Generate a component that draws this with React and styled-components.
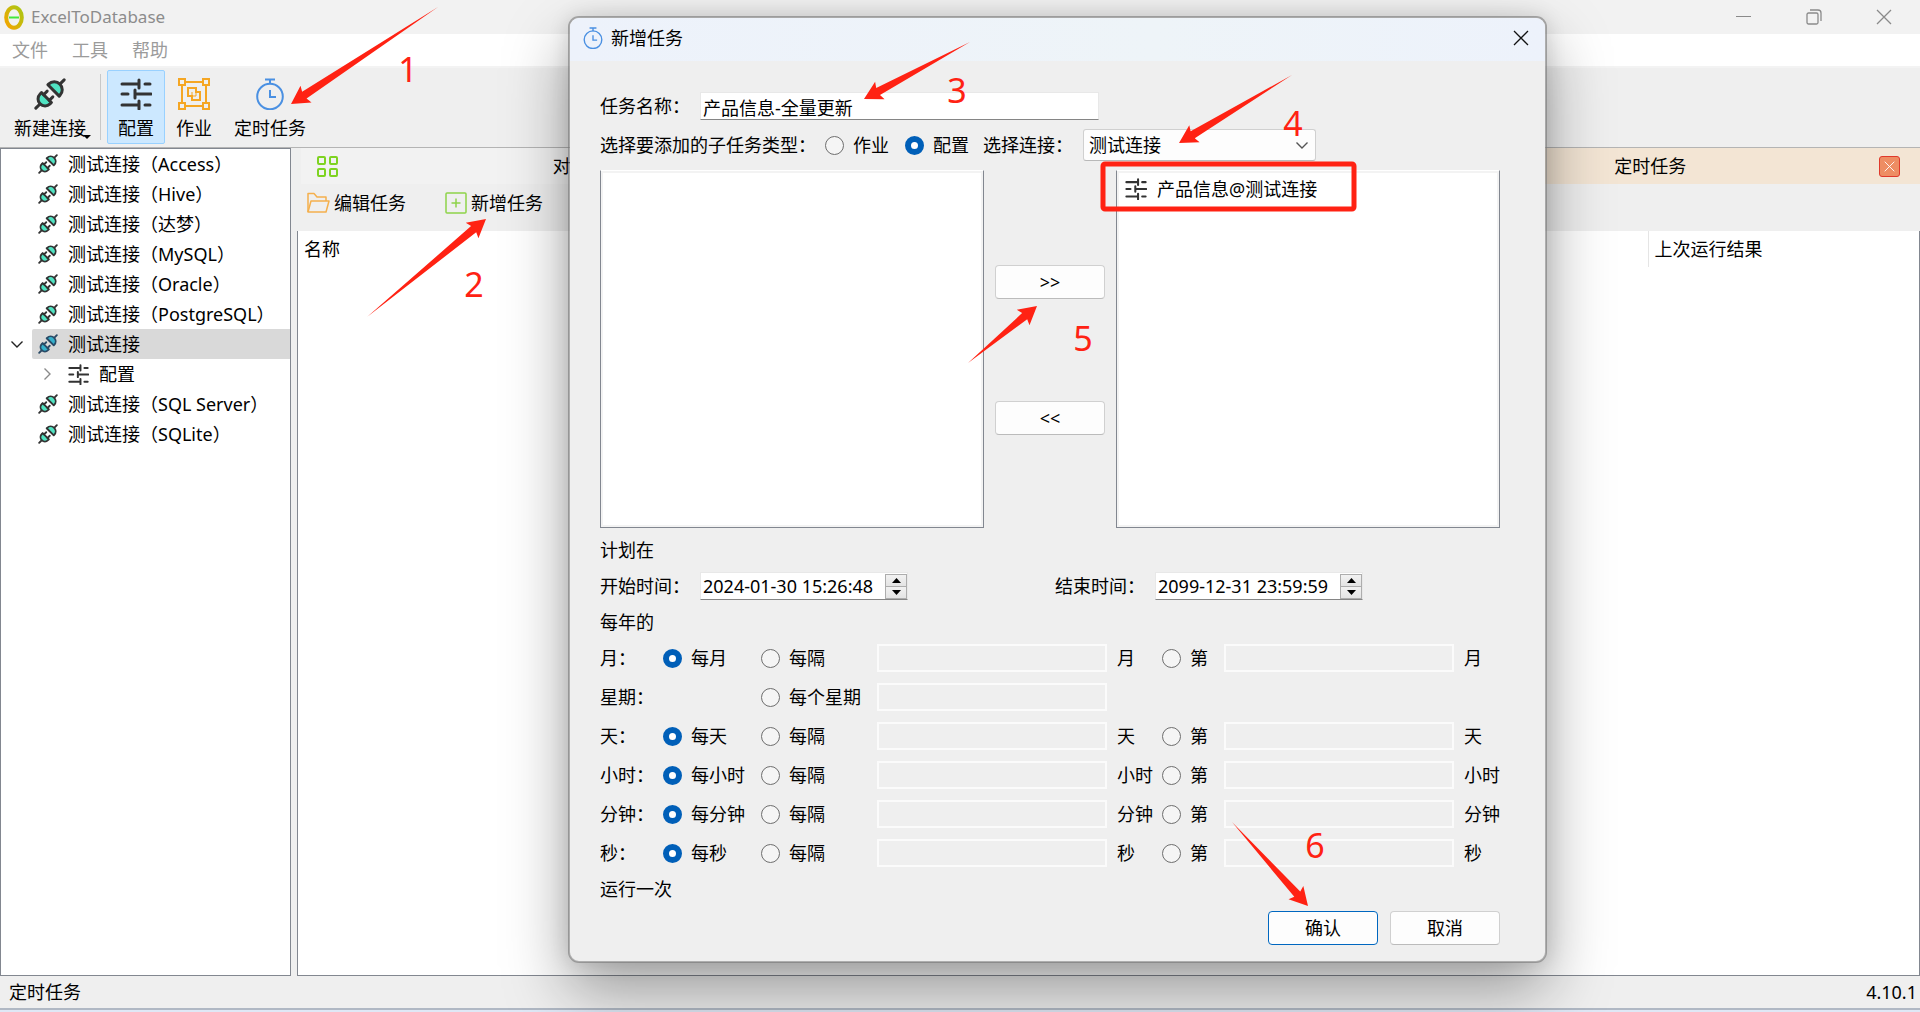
import React from 'react';
import styled, { createGlobalStyle, css } from 'styled-components';

const colors = {
  panel: '#efefef',
  frame: '#828790',
  accent: '#005fb8',
  mark: '#ff2213',
  teal: '#50e3c2',
  dark: '#333333',
  orange: '#f5a623',
  blue: '#4a90e2',
  green: '#7ed321',
};

const GlobalStyle = createGlobalStyle`
  * {
    box-sizing: border-box;
  }
  body {
    margin: 0;
    background: ${colors.panel};
  }
  body, button, input, select {
    font-family: 'Noto Sans', 'Noto Sans CJK SC', sans-serif;
    font-size: 18px;
    line-height: 26px;
    color: #000;
  }
`;

const Window = styled.div`
  position: relative;
  display: flex;
  flex-direction: column;
  min-height: 100vh;
  overflow: hidden;
`;

const TitleBar = styled.header`
  display: flex;
  align-items: center;
  gap: 7px;
  height: 34px;
  padding: 0 28px 0 4px;
  background: #f2f2f2;
  color: #8c8c8c;
`;

const AppTitle = styled.span`
  flex: 1;
  font-size: 17px;
`;

const WindowControls = styled.div`
  display: flex;
  gap: 54px;
`;

const IconButton = styled.button`
  display: flex;
  padding: 0;
  border: none;
  background: none;
`;

const MenuBar = styled.nav`
  display: flex;
  gap: 24px;
  height: 34px;
  padding: 3px 12px;
  background: #fff;
  border-bottom: 2px solid #f3f3f3;
`;

const MenuItem = styled.button`
  padding: 0;
  border: none;
  background: none;
  color: #9b9b9b;
`;

const ToolBar = styled.div`
  display: flex;
  height: 80px;
  padding: 2px 3px;
  border-bottom: 1px solid #b4b4b4;
`;

const ToolButton = styled.button`
  position: relative;
  display: flex;
  flex-direction: column;
  align-items: center;
  gap: 5px;
  height: 74px;
  padding: 7px 10px 0;
  border: 1px solid transparent;
  border-radius: 2px;
  background: none;
  white-space: nowrap;
  ${({ $active }) =>
    $active &&
    css`
      background: #cce8ff;
      border-color: #99d1ff;
    `};
`;

const ToolSeparator = styled.div`
  width: 1px;
  height: 66px;
  margin: 4px 6px 0 3px;
  background: #c8c8c8;
`;

const MenuArrow = styled.i`
  position: absolute;
  right: 5px;
  bottom: 4px;
  border: 4px solid transparent;
  border-top-color: #000;
  border-bottom: none;
`;

const Main = styled.main`
  flex: 1;
  display: flex;
  gap: 6px;
`;

const Tree = styled.ul`
  width: 291px;
  margin: 0;
  padding: 0;
  list-style: none;
  background: #fff;
  border: 1px solid ${colors.frame};
`;

const TreeItem = styled.li`
  display: flex;
  align-items: center;
  height: 30px;
  padding-left: ${({ $level }) => ($level ? 30 : 0)}px;
`;

const TreeToggle = styled.span`
  display: flex;
  justify-content: center;
  width: 31px;
`;

const TreeLabel = styled.span`
  flex: 1;
  display: flex;
  align-items: center;
  gap: 10px;
  height: 30px;
  padding-left: 6px;
  border-radius: 2px 0 0 2px;
  white-space: nowrap;
  background: ${({ $selected }) => ($selected ? '#d9d9d9' : 'none')};
`;

const Workspace = styled.section`
  flex: 1;
  display: flex;
  flex-direction: column;
`;

const TabBar = styled.div`
  display: flex;
  height: 36px;
  padding-left: 4px;
`;

const Tab = styled.button`
  flex: 1;
  display: grid;
  grid-template-columns: 25px 1fr 25px;
  align-items: center;
  padding: 0 16px;
  border: none;
  background: ${({ $active }) => ($active ? '#f3e5d4' : '#f2f2f2')};
`;

const TabText = styled.span`
  grid-column: 2;
  text-align: center;
`;

const TabSpace = styled.div`
  flex: 1;
  padding: 0 16px;
`;

const CloseMark = styled.span`
  display: grid;
  place-items: center;
  width: 21px;
  height: 21px;
  border: 1px solid #e0392b;
  border-radius: 3px;
  background: #ee8d63;
`;

const TaskBar = styled.div`
  display: flex;
  gap: 39px;
  height: 47px;
  padding: 0 9px;
`;

const TaskButton = styled.button`
  display: flex;
  align-items: center;
  gap: 4px;
  height: 38px;
  padding: 0;
  border: none;
  background: none;
`;

const TableFrame = styled.div`
  flex: 1;
  background: #fff;
  border: 1px solid ${colors.frame};
  border-top: none;
`;

const TaskTable = styled.table`
  width: 100%;
  table-layout: fixed;
  border-collapse: collapse;
`;

const HeadCell = styled.th`
  width: ${({ $width }) => $width || 'auto'};
  height: 36px;
  padding: 0 6px;
  font-weight: 400;
  text-align: left;
  & + & {
    border-left: 1px solid #e5e5e5;
  }
`;

const StatusBar = styled.footer`
  display: flex;
  justify-content: space-between;
  height: 36px;
  padding: 3px 3px 0 9px;
  border-bottom: 2px solid #dfe8f6;
  box-shadow: inset 0 -2px #b0b8c4;
`;

const Dialog = styled.section`
  position: absolute;
  left: 568px;
  top: 16px;
  width: 979px;
  border: 2px solid rgba(120, 120, 120, 0.6);
  border-radius: 11px;
  background: ${colors.panel};
  background-clip: padding-box;
  box-shadow:
    0 0 20px rgba(0, 0, 0, 0.12),
    0 28px 64px rgba(0, 0, 0, 0.36);
`;

const DialogTitle = styled.header`
  display: flex;
  align-items: center;
  gap: 7px;
  height: 43px;
  padding: 0 16px 3px 12px;
  border-radius: 9px 9px 0 0;
  background: linear-gradient(90deg, #edf2fb, #eef4f8 60%, #edf2fb);
`;

const DialogName = styled.h1`
  flex: 1;
  margin: 0;
  font-size: 18px;
  font-weight: 400;
`;

const Form = styled.form`
  display: flex;
  flex-direction: column;
  gap: 9px;
  padding: 31px 45px 16px 30px;
`;

const FormRow = styled.div`
  display: flex;
  align-items: center;
  height: ${({ $tall }) => ($tall ? 32 : 28)}px;
`;

const FieldLabel = styled.label`
  flex: none;
  width: 100px;
  white-space: nowrap;
`;

const TextInput = styled.input`
  width: 399px;
  height: 28px;
  padding: 1px 2px 0;
  border: 1px solid #e8e8e8;
  border-bottom-color: #858585;
  background: #fff;
  outline: none;
`;

const Legend = styled.span`
  width: 225px;
`;

const RadioLabel = styled.label`
  display: flex;
  align-items: center;
  gap: 9px;
  white-space: nowrap;
`;

const Radio = styled.input.attrs({ type: 'radio' })`
  appearance: none;
  width: 19px;
  height: 19px;
  margin: 0;
  border: 1px solid #6e6e6e;
  border-radius: 50%;
  background: #f5f5f5;
  &:checked {
    border: 6px solid ${colors.accent};
    background: #fff;
  }
`;

const RadioPair = styled.div`
  display: flex;
  gap: 16px;
  margin-right: 14px;
`;

const SelectBox = styled.div`
  display: grid;
  align-items: center;
  width: 233px;
  & > * {
    grid-area: 1 / 1;
  }
  & > svg {
    justify-self: end;
    margin-right: 8px;
    pointer-events: none;
  }
`;

const Select = styled.select`
  appearance: none;
  height: 32px;
  padding: 0 5px;
  border: 1px solid #d0d0d0;
  border-bottom-color: #b8b8b8;
  border-radius: 3px;
  background: #fdfdfd;
`;

const Transfer = styled.div`
  display: grid;
  grid-template-columns: 1fr 110px 1fr;
  column-gap: 11px;
  height: 358px;
`;

const ListBox = styled.ul`
  margin: 0;
  padding: 3px 8px;
  list-style: none;
  border: 1px solid ${colors.frame};
  border-top-color: #fff;
  background: #fff;
  box-shadow: inset 0 0 0 2px #f3f3f3;
`;

const ListItem = styled.li`
  display: flex;
  align-items: center;
  gap: 10px;
  height: 30px;
`;

const TransferButtons = styled.div`
  display: flex;
  flex-direction: column;
  gap: 102px;
  padding-top: 95px;
`;

const PushButton = styled.button`
  width: 110px;
  height: 34px;
  padding: 0;
  border: 1px solid ${({ $primary }) => ($primary ? '#0067c0' : '#d0d0d0')};
  border-bottom-color: ${({ $primary }) => ($primary ? '#0067c0' : '#bbb')};
  border-radius: 4px;
  background: #fdfdfd;
`;

const DateBox = styled.div`
  display: flex;
  align-items: center;
  width: 208px;
  height: 28px;
  margin-right: 147px;
  border: 1px solid #e8e8e8;
  border-bottom-color: #858585;
  background: #fff;
`;

const DateInput = styled.input`
  flex: 1;
  min-width: 0;
  height: 26px;
  padding: 0 2px;
  border: none;
  background: none;
  outline: none;
`;

const Spinner = styled.div`
  display: grid;
  width: 22px;
  height: 25px;
`;

const SpinButton = styled.button`
  display: grid;
  place-items: center;
  padding: 0;
  border: 1px solid #adadad;
  background: linear-gradient(#f2f2f2, #e4e4e4);
  & + & {
    border-top: none;
  }
`;

const Caption = styled.div`
  height: 26px;
`;

const Schedule = styled.div`
  display: flex;
  flex-direction: column;
  gap: 11px;
`;

const ScheduleRow = styled.div`
  display: grid;
  grid-template-columns: 63px 98px 116px 1fr 55px 62px 1fr 46px;
  align-items: center;
  height: 28px;
  white-space: nowrap;
`;

const RangeInput = styled.input`
  width: 100%;
  height: 28px;
  border: 2px solid #fbfbfb;
  background: transparent;
`;

const Unit = styled.span`
  padding-left: 10px;
`;

const Actions = styled.div`
  display: flex;
  justify-content: flex-end;
  gap: 12px;
`;

const Marks = styled.svg`
  position: absolute;
  left: 0;
  top: 0;
  pointer-events: none;
  overflow: visible;
  font-family: 'Noto Sans', sans-serif;
  font-size: 34px;
`;

const PlugIcon = ({ size = 20, selected }) => {
  const ink = selected ? '#2a4a66' : colors.dark;
  const fill = selected ? '#35b0cb' : colors.teal;
  return (
    <svg width={size} height={size} viewBox="-16 -16 32 32" aria-hidden="true">
      <g transform="rotate(-45)" fill={fill} stroke={ink} strokeWidth="3">
        <path d="M-20 0H-13M20 0H14" strokeLinecap="round" />
        <path d="M-5 -7H-7A7 7 0 0 0 -7 7H-5Z" strokeLinejoin="round" />
        <path d="M-5 -4H0M-5 4H0" strokeLinecap="round" />
        <path d="M5 -8V8H6A8 8 0 0 0 6 -8Z" strokeLinejoin="round" />
      </g>
    </svg>
  );
};

const SlidersIcon = ({ size = 32 }) => (
  <svg width={size} height={size} viewBox="0 0 32 32" fill="none" stroke={colors.dark} strokeWidth="3" strokeLinecap="round" aria-hidden="true">
    <path d="M2 6H19M19 2V10M25 6H30" />
    <path d="M2 16H8M15 12V20M15 16H31" />
    <path d="M2 27H19M19 23V31M25 27H30" />
  </svg>
);

const JobIcon = () => (
  <svg width="32" height="32" viewBox="0 0 32 32" fill="none" stroke={colors.orange} strokeWidth="2" aria-hidden="true">
    <path d="M1 1H7V7H1ZM25 1H31V7H25ZM1 25H7V31H1ZM25 25H31V31H25Z" />
    <path d="M7 4H25M7 28H25M4 7V25M28 7V25" />
    <path d="M10 10H18V14H22V22H14V18H10Z" />
    <path d="M14 14V18H18V14" strokeWidth="1" />
  </svg>
);

const TimerIcon = ({ size = 32, stroke = 2 }) => (
  <svg width={size} height={size} viewBox="0 0 32 32" fill="none" stroke={colors.blue} strokeWidth={stroke} aria-hidden="true">
    <circle cx="16" cy="18.5" r="12.8" />
    <path d="M11 1.5H21M16 2V6M16 12V19H22" />
  </svg>
);

const GridIcon = () => (
  <svg width="21" height="21" viewBox="0 0 21 21" fill="none" stroke={colors.green} strokeWidth="2" aria-hidden="true">
    <rect x="1" y="1" width="7" height="7" rx="1" />
    <rect x="13" y="1" width="7" height="7" rx="1" />
    <rect x="1" y="13" width="7" height="7" rx="1" />
    <rect x="13" y="13" width="7" height="7" rx="1" />
  </svg>
);

const FolderIcon = () => (
  <svg width="24" height="22" viewBox="0 0 24 22" fill="none" stroke="#f5b04d" strokeWidth="1.5" strokeLinejoin="round" aria-hidden="true">
    <path d="M2 20V1.5H8L11 5H20V9" />
    <path d="M2 20L5 9H23L20 20Z" />
  </svg>
);

const AddIcon = () => (
  <svg width="22" height="22" viewBox="0 0 22 22" fill="none" stroke="#8ed44a" strokeWidth="1.5" aria-hidden="true">
    <rect x="1" y="1" width="20" height="20" rx="1" />
    <path d="M11 6.5V15.5M6.5 11H15.5" />
  </svg>
);

const LogoIcon = () => (
  <svg width="20" height="25" viewBox="0 0 20 25" fill="none" aria-hidden="true">
    <defs>
      <linearGradient id="logo" x1="0" y1="1" x2="1" y2="0">
        <stop offset="0" stopColor="#f7a400" />
        <stop offset="1" stopColor="#a8c814" />
      </linearGradient>
    </defs>
    <ellipse cx="10" cy="12.5" rx="7.8" ry="10.3" stroke="url(#logo)" strokeWidth="4" />
    <path d="M5 12.5H15" stroke="#42e83c" strokeWidth="2" />
  </svg>
);

const CrossIcon = ({ size = 16, color = '#8a8a8a' }) => (
  <svg width={size} height={size} viewBox="0 0 16 16" fill="none" stroke={color} strokeWidth="1.3" aria-hidden="true">
    <path d="M1 1L15 15M15 1L1 15" />
  </svg>
);

const ChevronIcon = ({ right, color = '#222' }) => (
  <svg width="12" height="12" viewBox="0 0 12 12" fill="none" stroke={color} strokeWidth="1.4" aria-hidden="true">
    <path d={right ? 'M3.5 0.5L9 6L3.5 11.5' : 'M0.5 3.5L6 9L11.5 3.5'} />
  </svg>
);

const connections = [
  { name: '测试连接（Access）' },
  { name: '测试连接（Hive）' },
  { name: '测试连接（达梦）' },
  { name: '测试连接（MySQL）' },
  { name: '测试连接（Oracle）' },
  { name: '测试连接（PostgreSQL）' },
  { name: '测试连接', selected: true, children: ['配置'] },
  { name: '测试连接（SQL Server）' },
  { name: '测试连接（SQLite）' },
];

const units = [
  { id: 'month', unit: '月', every: '每月', interval: '每隔' },
  { id: 'week', unit: '星期', interval: '每个星期' },
  { id: 'day', unit: '天', every: '每天', interval: '每隔' },
  { id: 'hour', unit: '小时', every: '每小时', interval: '每隔' },
  { id: 'minute', unit: '分钟', every: '每分钟', interval: '每隔' },
  { id: 'second', unit: '秒', every: '每秒', interval: '每隔' },
];

const steps = [
  { from: [438, 7], to: [291, 104], at: [408, 82] },
  { from: [367, 317], to: [486, 219], at: [474, 297] },
  { from: [970, 42], to: [864, 99], at: [957, 103] },
  { from: [1292, 75], to: [1179, 143], at: [1293, 136] },
  { from: [968, 363], to: [1037, 306], at: [1083, 351] },
  { from: [1232, 822], to: [1308, 906], at: [1315, 858] },
];

// outline of a tapering arrow, measured back from its tip
const arrowPoints = ([x1, y1], [x2, y2]) => {
  const length = Math.hypot(x1 - x2, y1 - y2);
  const dx = (x1 - x2) / length;
  const dy = (y1 - y2) / length;
  const point = (along, across) => `${x2 + dx * along - dy * across},${y2 + dy * along + dx * across}`;
  return [point(0, 0), point(18, 10), point(16, 4), point(length, 0), point(16, -4), point(18, -10)].join(' ');
};

const ConnectionTree = () => (
  <Tree>
    {connections.map(({ name, selected, children }) => (
      <React.Fragment key={name}>
        <TreeItem>
          <TreeToggle>{children && <ChevronIcon />}</TreeToggle>
          <TreeLabel $selected={selected}>
            <PlugIcon selected={selected} />
            {name}
          </TreeLabel>
        </TreeItem>
        {children?.map((child) => (
          <TreeItem key={child} $level={1}>
            <TreeToggle>
              <ChevronIcon right color="#8a8a8a" />
            </TreeToggle>
            <TreeLabel>
              <SlidersIcon size={21} />
              {child}
            </TreeLabel>
          </TreeItem>
        ))}
      </React.Fragment>
    ))}
  </Tree>
);

const DateField = ({ id, label, value }) => (
  <>
    <FieldLabel htmlFor={id}>{label}</FieldLabel>
    <DateBox>
      <DateInput id={id} defaultValue={value} />
      <Spinner>
        <SpinButton type="button" aria-label="+">
          <svg width="9" height="5" viewBox="0 0 9 5">
            <path d="M0 5L4.5 0L9 5Z" />
          </svg>
        </SpinButton>
        <SpinButton type="button" aria-label="-">
          <svg width="9" height="5" viewBox="0 0 9 5">
            <path d="M0 0L4.5 5L9 0Z" />
          </svg>
        </SpinButton>
      </Spinner>
    </DateBox>
  </>
);

const ScheduleUnit = ({ id, unit, every, interval }) => (
  <ScheduleRow>
    <span>{unit}：</span>
    {every ? (
      <RadioLabel>
        <Radio name={id} defaultChecked />
        {every}
      </RadioLabel>
    ) : (
      <span />
    )}
    <RadioLabel>
      <Radio name={id} />
      {interval}
    </RadioLabel>
    <RangeInput aria-label={interval} disabled />
    {every && (
      <>
        <Unit>{unit}</Unit>
        <RadioLabel>
          <Radio name={id} />第
        </RadioLabel>
        <RangeInput aria-label="第" disabled />
        <Unit>{unit}</Unit>
      </>
    )}
  </ScheduleRow>
);

const TaskDialog = () => (
  <Dialog role="dialog" aria-labelledby="dialog-name">
    <DialogTitle>
      <TimerIcon size={22} />
      <DialogName id="dialog-name">新增任务</DialogName>
      <IconButton type="button" aria-label="取消">
        <CrossIcon color="#111" />
      </IconButton>
    </DialogTitle>
    <Form onSubmit={(event) => event.preventDefault()}>
      <FormRow>
        <FieldLabel htmlFor="task-name">任务名称：</FieldLabel>
        <TextInput id="task-name" defaultValue="产品信息-全量更新" />
      </FormRow>
      <FormRow $tall>
        <Legend>选择要添加的子任务类型：</Legend>
        <RadioPair>
          <RadioLabel>
            <Radio name="kind" />
            作业
          </RadioLabel>
          <RadioLabel>
            <Radio name="kind" defaultChecked />
            配置
          </RadioLabel>
        </RadioPair>
        <FieldLabel htmlFor="connection">选择连接：</FieldLabel>
        <SelectBox>
          <Select id="connection">
            <option>测试连接</option>
          </Select>
          <ChevronIcon color="#555" />
        </SelectBox>
      </FormRow>
      <Transfer>
        <ListBox />
        <TransferButtons>
          <PushButton type="button">&gt;&gt;</PushButton>
          <PushButton type="button">&lt;&lt;</PushButton>
        </TransferButtons>
        <ListBox>
          <ListItem>
            <SlidersIcon size={22} />
            产品信息@测试连接
          </ListItem>
        </ListBox>
      </Transfer>
      <Caption>计划在</Caption>
      <FormRow>
        <DateField id="start-time" label="开始时间：" value="2024-01-30 15:26:48" />
        <DateField id="end-time" label="结束时间：" value="2099-12-31 23:59:59" />
      </FormRow>
      <Caption>每年的</Caption>
      <Schedule>
        {units.map((item) => (
          <ScheduleUnit key={item.id} {...item} />
        ))}
      </Schedule>
      <Caption>运行一次</Caption>
      <Actions>
        <PushButton $primary>确认</PushButton>
        <PushButton type="button">取消</PushButton>
      </Actions>
    </Form>
  </Dialog>
);

const StepMarks = () => (
  <Marks width="100%" height="100%" fill={colors.mark}>
    {steps.map(({ from, to, at }, index) => (
      <g key={index}>
        <polygon points={arrowPoints(from, to)} />
        <text x={at[0]} y={at[1]} textAnchor="middle">
          {index + 1}
        </text>
      </g>
    ))}
    <rect x="1103" y="164" width="251" height="45" rx="2" fill="none" stroke={colors.mark} strokeWidth="5" />
  </Marks>
);

const App = () => {
  return (
    <Window>
      <GlobalStyle />
      <TitleBar>
        <LogoIcon />
        <AppTitle>ExcelToDatabase</AppTitle>
        <WindowControls>
          <IconButton aria-label="minimize">
            <svg width="16" height="16" viewBox="0 0 16 16" stroke="#8a8a8a">
              <path d="M0 7.5H15" />
            </svg>
          </IconButton>
          <IconButton aria-label="restore">
            <svg width="16" height="16" viewBox="0 0 16 16" fill="none" stroke="#8a8a8a" strokeWidth="1.3">
              <rect x="1" y="4" width="11" height="11" rx="1.5" />
              <path d="M4 1H12Q15 1 15 4V12" />
            </svg>
          </IconButton>
          <IconButton aria-label="close">
            <CrossIcon />
          </IconButton>
        </WindowControls>
      </TitleBar>
      <MenuBar>
        <MenuItem>文件</MenuItem>
        <MenuItem>工具</MenuItem>
        <MenuItem>帮助</MenuItem>
      </MenuBar>
      <ToolBar>
        <ToolButton>
          <PlugIcon size={32} />
          新建连接
          <MenuArrow />
        </ToolButton>
        <ToolSeparator />
        <ToolButton $active>
          <SlidersIcon />
          配置
        </ToolButton>
        <ToolButton>
          <JobIcon />
          作业
        </ToolButton>
        <ToolButton>
          <TimerIcon />
          定时任务
        </ToolButton>
      </ToolBar>
      <Main>
        <ConnectionTree />
        <Workspace>
          <TabBar>
            <Tab>
              <GridIcon />
              <TabText>对象</TabText>
            </Tab>
            <TabSpace />
            <Tab $active>
              <TabText>定时任务</TabText>
              <CloseMark>
                <CrossIcon size={11} color="#fff" />
              </CloseMark>
            </Tab>
          </TabBar>
          <TaskBar>
            <TaskButton>
              <FolderIcon />
              编辑任务
            </TaskButton>
            <TaskButton>
              <AddIcon />
              新增任务
            </TaskButton>
          </TaskBar>
          <TableFrame>
            <TaskTable>
              <thead>
                <tr>
                  <HeadCell>名称</HeadCell>
                  <HeadCell $width="271px">上次运行结果</HeadCell>
                </tr>
              </thead>
            </TaskTable>
          </TableFrame>
        </Workspace>
      </Main>
      <StatusBar>
        <span>定时任务</span>
        <span>4.10.1</span>
      </StatusBar>
      <TaskDialog />
      <StepMarks />
    </Window>
  );
};

export default App;
